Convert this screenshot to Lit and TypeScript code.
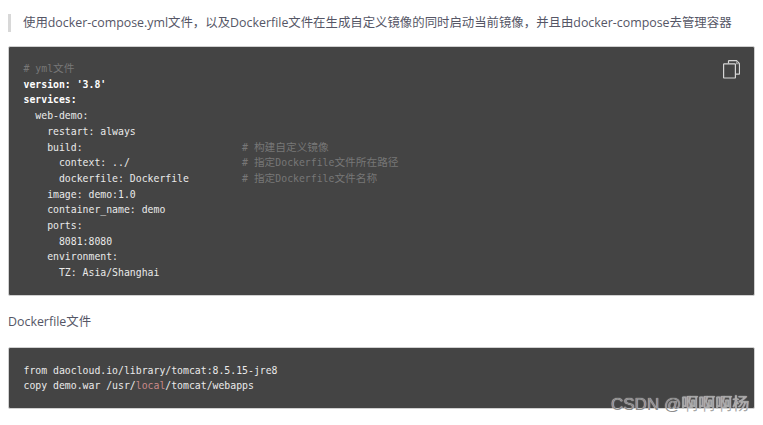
import { LitElement, html, css } from "lit";
import { customElement } from "lit/decorators.js";

@customElement("app-root")
export class AppRoot extends LitElement {
  static styles = css`
    :host { display: block; position: relative; width: 763px; height: 425px; overflow: hidden; background: #fff;
      font-family: "Open Sans", "Noto Sans CJK SC", sans-serif; color: #4f4f4f; }
    .page { padding: 14px 8px 0 8px; display: flex; flex-direction: column; }
    .quote { border-left: 3px solid #d8d8d8; padding-left: 12px; height: 18px; line-height: 18px; font-size: 12.4px; color: #555666; white-space: nowrap; }
    .block { position: relative; box-sizing: border-box; width: 747px; background: #444; border: 1px solid #d0d0d0; border-radius: 2px; margin: 0;
      padding: 14px 14.5px; font-family: "DejaVu Sans Mono", "Noto Sans CJK SC", monospace; font-size: 9.82px; line-height: 15.7px; color: #eaeaea; white-space: pre; }
    .first { margin-top: 14px; height: 250px; }
    .second { margin-top: 16px; height: 62px; padding-top: 15px; line-height: 15.4px; }
    .para { margin-top: 17px; height: 18px; line-height: 18px; font-size: 12.4px; color: #555666; }
    .c { color: #777; }
    .z { font-size: 10.7px; line-height: 1; }
    .b { color: #fff; font-weight: 700; }
    .k { color: #c98a8a; }
    .copy { position: absolute; right: 14px; top: 13px; width: 17px; height: 19px; }
    .mark { position: absolute; left: 611px; top: 394px; font-family: "Liberation Sans", "Noto Sans CJK SC", sans-serif; font-size: 17px; line-height: 22px; color: #8c8c8c;
      white-space: nowrap; text-shadow: 0 0 1px #fff; }
    .mark span { color: #a6a6a6; }
  `;
  render() {
    return html`<div class="page">
      <div class="quote">使用docker-compose.yml文件，以及Dockerfile文件在生成自定义镜像的同时启动当前镜像，并且由docker-compose去管理容器</div>
      <pre class="block first"><svg class="copy" viewBox="0 0 17 19" fill="none" stroke="#d6d6d6" stroke-width="1.2"><path d="M5.5 3.5V1.2a.6.6 0 0 1 .6-.6h7.4l3 3v10a.6.6 0 0 1-.6.6H13"/><path d="M1.2 3.8h10.6a.6.6 0 0 1 .6.6v13a.6.6 0 0 1-.6.6H1.2a.6.6 0 0 1-.6-.6v-13a.6.6 0 0 1 .6-.6z"/><path d="M13.6 1v2.7h2.6" stroke="#9a9a9a"/></svg><span class="c"># yml<span class="z">文件</span></span>
<span class="b">version: '3.8'</span>
<span class="b">services:</span>
  web-demo:
    restart: always
    build:                           <span class="c"># <span class="z">构建自定义镜像</span></span>
      context: ../                   <span class="c"># <span class="z">指定</span>Dockerfile<span class="z">文件所在路径</span></span>
      dockerfile: Dockerfile         <span class="c"># <span class="z">指定</span>Dockerfile<span class="z">文件名称</span></span>
    image: demo:1.0
    container_name: demo
    ports:
      8081:8080
    environment:
      TZ: Asia/Shanghai</pre>
      <div class="para">Dockerfile文件</div>
      <pre class="block second">from daocloud.io/library/tomcat:8.5.15-jre8
copy demo.war /usr/<span class="k">local</span>/tomcat/webapps</pre>
    </div>
    <div class="mark">CSDN @<span>啊啊啊杨</span></div>`;
  }
}
